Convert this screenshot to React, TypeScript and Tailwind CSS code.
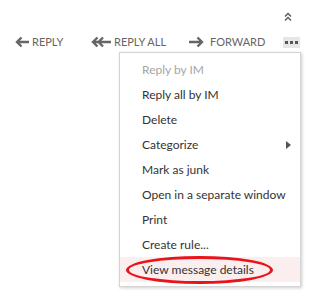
const ArrowLeft = () => (
  <svg width="16" height="12" viewBox="0 0 16 12" className="shrink-0">
    <path d="M15 6H3M7.5 1.5L3 6l4.5 4.5" fill="none" stroke="#666" strokeWidth="2.4" />
  </svg>
);

const ArrowRight = () => (
  <svg width="17" height="12" viewBox="0 0 17 12" className="shrink-0">
    <path d="M1 6h13M9.5 1.5L14 6l-4.5 4.5" fill="none" stroke="#666" strokeWidth="2.4" />
  </svg>
);

const DoubleLeft = () => (
  <svg width="22" height="12" viewBox="0 0 22 12" className="shrink-0">
    <path d="M21 6H3M7.5 1.5L3 6l4.5 4.5M13 1.5L8.5 6l4.5 4.5" fill="none" stroke="#666" strokeWidth="2.4" />
  </svg>
);

const items = [
  "Reply by IM",
  "Reply all by IM",
  "Delete",
  "Categorize",
  "Mark as junk",
  "Open in a separate window",
  "Print",
  "Create rule...",
  "View message details",
];

export default function App() {
  return (
    <div
      className="w-[317px] h-[297px] bg-white relative"
      style={{ fontFamily: 'Lato, "Open Sans", sans-serif' }}
    >
      <div className="flex justify-end pt-[12px] pr-[25px] h-[36px]">
        <svg width="8" height="10" viewBox="0 0 8 10">
          <path d="M1 4.5L4 1.5l3 3M1 8.5L4 5.5l3 3" fill="none" stroke="#555" strokeWidth="1.3" />
        </svg>
      </div>
      <div className="flex items-center h-[12px] text-[11px] text-[#666] whitespace-nowrap">
        <div className="flex items-center gap-[2px] ml-[14px] w-[50px] shrink-0">
          <ArrowLeft />
          <span>REPLY</span>
        </div>
        <div className="flex items-center gap-[2px] ml-[26px] w-[73px] shrink-0">
          <DoubleLeft />
          <span>REPLY ALL</span>
        </div>
        <div className="flex items-center gap-[5px] ml-[25px] w-[72px] shrink-0">
          <ArrowRight />
          <span>FORWARD</span>
        </div>
        <div className="ml-[23px] w-[17px] h-[11px] shrink-0 bg-[#e6e6e6] flex items-center justify-center gap-[2px]">
          <span className="w-[3px] h-[3px] bg-[#555]" />
          <span className="w-[3px] h-[3px] bg-[#555]" />
          <span className="w-[3px] h-[3px] bg-[#555]" />
        </div>
      </div>
      <div className="ml-[119px] mt-[4px] w-[182px] border border-[#d4d4d4] bg-white shadow-[1px_1px_3px_rgba(0,0,0,0.2)] pt-[4px] pb-[4px] text-[12px] text-[#333] whitespace-nowrap">
        {items.map((t, i) => (
          <div
            key={t}
            className={
              "relative flex items-center h-[25px] pl-[22px] pr-[8px] " +
              (i === 0 ? "text-[#a6a6a6] " : "") +
              (i === 8 ? "bg-[#fbeeee]" : "")
            }
          >
            <span>{t}</span>
            {i === 3 && (
              <svg width="5" height="8" viewBox="0 0 5 8" className="ml-auto mr-[1px]">
                <path d="M0 0l5 4-5 4z" fill="#555" />
              </svg>
            )}
            {i === 8 && (
              <div className="absolute left-[6px] top-[-1px] w-[147px] h-[28px] rounded-[50%] border-[3px] border-[#e8141c]" />
            )}
          </div>
        ))}
      </div>
    </div>
  );
}
